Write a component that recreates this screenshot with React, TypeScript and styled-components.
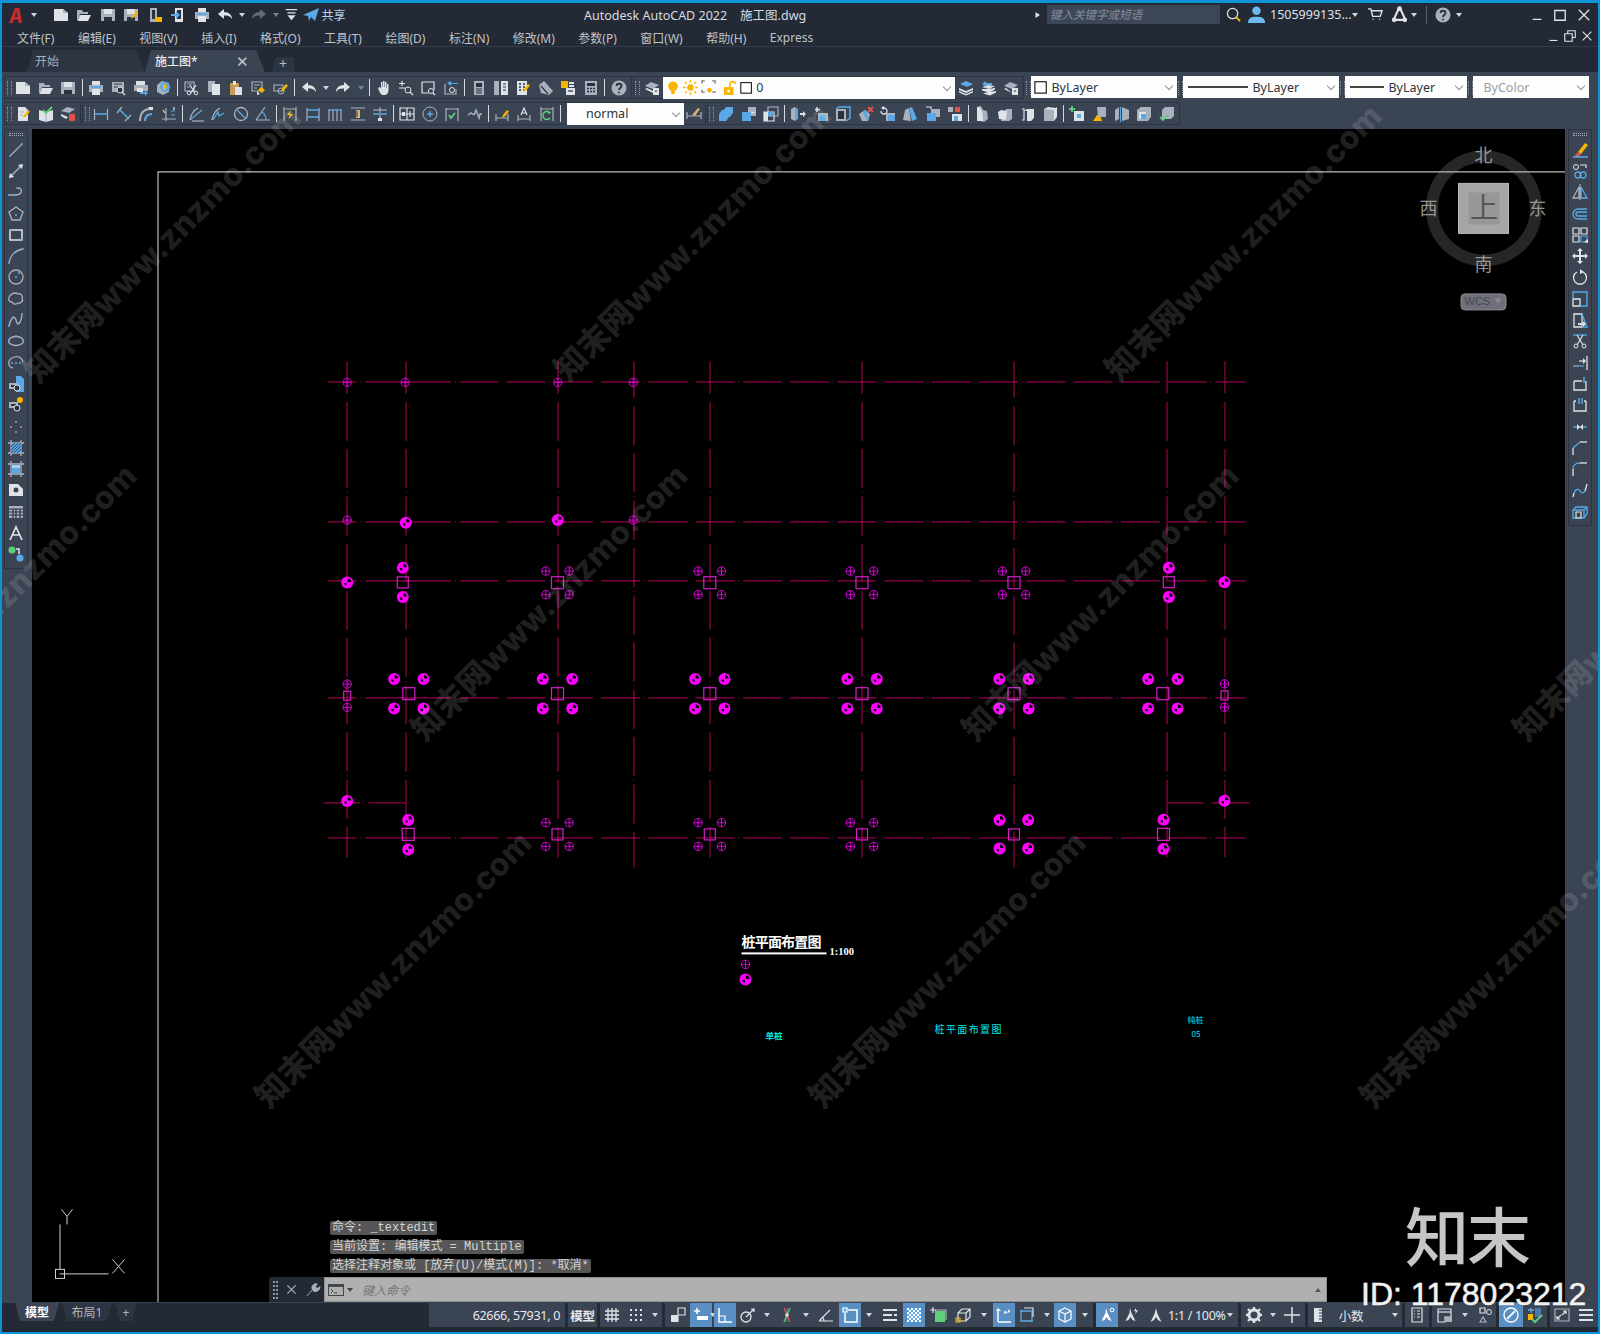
import React, { ReactNode } from 'react'
import styled, { createGlobalStyle } from 'styled-components'

const W = '#dfe3e8'
const L = '#a9b1bc'
const B = '#5aa9e6'
const Y = '#f7b500'
const R = '#e0524d'
const GN = '#5fce7a'
const D = '#2a3240'
const UI_FONT = '"Noto Sans", "Noto Sans CJK SC", sans-serif'

const GlobalStyle = createGlobalStyle`
  html, body {
    margin: 0;
    padding: 0;
    background: #232a35;
  }
  * {
    box-sizing: border-box;
  }
`

const s = (d: string, c = W, w = 1.2) => <path d={d} stroke={c} strokeWidth={w} fill="none" />
const f = (d: string, c = W) => <path d={d} fill={c} />
const dot = (x: number, y: number, c = B, r = 1) => <circle cx={x} cy={y} r={r} fill={c} />
const many = (...n: ReactNode[]) => <>{n.map((x, i) => <React.Fragment key={i}>{x}</React.Fragment>)}</>

const pencil = f('M9 9l4-5 2 1.5-4 5-3 1z', Y)
const doc = f('M3 1h7l3 3v11H3z')
const floppy = many(f('M1 2h14v12H1z', L), f('M4 2h8v5H4z'), f('M4 10h8v4H4z', D))
const bars = s('M1 3h14M1 8h14M1 13h14', W, 2)

const ICONS: Record<string, ReactNode> = {
  new: many(f('M1 2h9l5 4v8H1z'), f('M10 2l5 4h-5z', L)),
  open: many(f('M1 3h5l1 2h5v2H4l-2 6H1z', L), f('M4 8h11l-3 6H1.5z')),
  save: floppy,
  saveas: many(floppy, pencil),
  webopen: many(f('M3 1h7v14H3z', L), f('M5 3h3v9H5z', D), f('M8 10h7v5H8z', Y)),
  websave: many(f('M5 1h8v14H5z', W), f('M7 3h4v9H7z', D), f('M1 7h5V4l4 4-4 4V9H1z', B)),
  print: many(f('M4 1h8v4H4z'), f('M1 5h14v7H1z', L), f('M4 9h8v6H4z'), f('M3 6h10v2H3z', B)),
  preview: many(f('M2 2h12v10H2z', L), s('M4 4h8M4 7h4', D), <circle cx={10} cy={10} r={3} fill={D} stroke={W} />, s('M12 12l3 3')),
  plot: many(f('M3 1h9v4H3z'), f('M1 5h14v6H1z', L), f('M4 8h6v4H4z'), f('M7 12h5v-2l3 3-3 3v-2H7z', B)),
  pub3d: many(f('M2 5l5-4 7 2v9l-6 3-6-3z', L), <circle cx={10} cy={7} r={5} fill={B} />, f('M8 4l4 1-1 4-3 1z', Y)),
  cut: many(s('M2 2h9v9H2z', L), s('M4 4h5M4 7h3', L), s('M7 5l5 8M13 5l-5 8'), <circle cx={6} cy={13} r={1.8} fill="none" stroke={W} />, <circle cx={13} cy={13} r={1.8} fill="none" stroke={W} />),
  copy: many(f('M2 1h7v11H2z', L), f('M6 4h8v11H6z')),
  paste: many(f('M2 3h9v12H2z', '#c89a55'), f('M5 1h3v4H5z'), f('M7 7h7v8H7z')),
  match: many(s('M2 2h10v9H2z', L), s('M4 5h6M4 8h3', L), f('M8 10l3-3 4 3-3 3z', Y), f('M7 11l3 3-3 1z')),
  markup: many(s('M1 5h9v6H1z', L), <circle cx={8} cy={11} r={3} fill="none" stroke={L} />, pencil),
  undo: f('M1 7l6-5v3c5 0 8 3 8 7-2-3-4-3.5-8-3.5V12z'),
  redo: f('M15 7L9 2v3c-5 0-8 3-8 7 2-3 4-3.5 8-3.5V12z'),
  redoOff: f('M15 7L9 2v3c-5 0-8 3-8 7 2-3 4-3.5 8-3.5V12z', '#626b78'),
  hand: f('M3 8l2-1 1 2V2h1.5v5H8V1h1.5v6h.5V2h1.5v6h.5V4h1.5v7c0 2-2 4-4 4H8c-2 0-3-2-5-7z'),
  zoomrt: many(s('M4 1v5M1 3.5h6M1 8h6'), <circle cx={10} cy={10} r={3} fill="none" stroke={W} />, s('M12 12l3 3')),
  zoomwin: many(s('M2 2h12v8M2 2v11h7', W), <circle cx={11} cy={11} r={2.5} fill="none" stroke={W} />, s('M13 13l2 2')),
  zoomprev: many(s('M2 4v10h11V9', L), f('M8 1L4 3l4 3V4h7V3H8z', B), <circle cx={9} cy={10} r={2.5} fill="none" stroke={W} />),
  propsP: many(f('M3 1h10v14H3z', L), f('M5 3h6v4H5z', D), s('M5 9h6M5 11h6M5 13h6', D)),
  dc: many(f('M1 1h5v14H1z', L), f('M8 1h7v14H8z'), s('M10 4h3M10 7h3M10 10h3', D)),
  palette: many(f('M2 1h10v14H2z'), s('M4 4h2M8 4h2M4 7h2M8 7h2M4 10h2M8 10h2', D, 1.5), pencil),
  sheet: many(f('M1 5l5-4 9 10-4 4-8-2z', L), s('M3 6l7 8', D)),
  markset: many(f('M1 1h7v7H1z', Y), s('M9 3h5M9 6h5', W, 2), f('M6 8h9v7H6z'), s('M8 11h5', D)),
  calc: many(f('M2 1h12v14H2z', L), f('M4 3h8v3H4z', D), s('M4 8.5h2M7 8.5h2M10 8.5h2M4 11.5h2M7 11.5h2M10 11.5h2', D, 1.5)),
  help: many(<circle cx={8} cy={8} r={7.5} fill={L} />, s('M5.5 6c0-3 5-3 5 0 0 2-2.5 2-2.5 4', D, 1.8), dot(8, 12.5, D, 1)),
  layer: many(f('M1 6l6-4 8 3-6 4z', L), f('M1 9l8 4 0-2-6-3z'), f('M9 8h6v7H9z'), s('M11 11h2', D)),
  layerM: many(f('M2 4l6-3 7 3-6 3z', B), f('M1 8l7 3 7-3v2l-7 3-7-3z'), f('M1 11l7 3 7-3v1.5l-7 3-7-3z')),
  layerP: many(f('M7 5l7 1-6 3-7-2z'), f('M7 9l7-1v1.5l-6 3-7-2V9z'), f('M7 12l8-1v1.5l-6 3-7-2z'), f('M1 4l4-3v2h6v2H5v2z', B)),
  layerI: many(f('M1 6l6-4 8 3-6 4z', L), f('M1 9l8 4-6-5z'), f('M9 8h6v7H9z'), s('M11 11h2', D)),
  doce: many(doc, pencil, s('M5 6h4M5 9h3', L)),
  docc: many(f('M1 4l7 2 7-2v10l-7 2-7-2z'), s('M8 6v10', L), s('M5 4l3 3 6-6', GN, 1.8)),
  layred: many(f('M1 5l6-4 8 2-6 4z', L), f('M1 8l7 3-2 2-5-3z'), f('M9 8h6v7H9z', R)),
  dimL: many(s('M1.5 3v11M14.5 3v11', L), s('M1.5 8h13', B, 1.5)),
  dimA: many(s('M1 7l5-6M9 15l6-6', L), s('M3 3l10 10', B, 1.5)),
  dimArc: many(s('M2 15c0-8 4-12 11-12', L, 2), s('M7 15c0-5 2-7 7-7', B, 2), f('M10 1h5v3h-3z')),
  dimO: many(s('M1 13h14M5 15V2', L), s('M10 5h4M10 9h4', B), s('M2 4l2 3M13 1v3')),
  dimR: many(s('M2 14C3 8 6 4 10 2', L, 1.3), s('M2 14L14 4', B, 1.3), s('M4 15h12', L)),
  dimJ: many(s('M2 14C3 8 6 4 10 2', L, 1.3), s('M3 14L8 6l1 4 5-3', B, 1.3)),
  dimD: many(<circle cx={8} cy={8} r={6.5} fill="none" stroke={L} strokeWidth={1.3} />, s('M4 4l8 8', B, 1.3)),
  dimAng: many(s('M1 14h14M1 14L10 1', L), s('M7 6c3 2 4 5 4 8', B, 1.3)),
  dimQ: many(s('M2 1v14M14 1v14M2 3h12', L), f('M9 4L5 9h3l-2 5 5-6H8z', Y)),
  dimBs: many(s('M2 2v13M14 2v13', L), s('M2 4h12M2 11h12', B, 1.3)),
  dimC: many(s('M2 3v12M6 3v12M10 3v12M14 3v12', L), s('M2 4h12', B, 1.3)),
  dimS: many(s('M1 2h14M1 14h14', L), f('M6 4h4v8H6z', '#d8b27a'), s('M6 6h2M6 8h2M6 10h2', D)),
  dimB: many(s('M8 1v14', L), s('M1 4h14', L), s('M1 8h6M9 8h6', B, 1.5), f('M6 12h4v3H6z', W)),
  dimT: many(s('M1 2h14v12H1z'), s('M1 8h14M8 2v12M11 5v6'), f('M3 6h3v4H3z', W)),
  dimCn: many(<circle cx={8} cy={8} r={7} fill="none" stroke={L} />, s('M8 5v6M5 8h6', B, 1.5)),
  dimIn: many(s('M2 2v13M14 2v13M2 3h12', L), s('M5 9l2 3 4-5', GN, 1.8)),
  dimJl: many(s('M1 9l3-2 3 2M15 8h-2l-1 4-3-8-2 5', L, 1.5)),
  dimEd: many(s('M2 8v7M14 8v7M2 12h12', L), pencil),
  dimTx: many(s('M2 9v6M14 9v6M2 13h12', L), s('M5 9l3-7 3 7M6 7h4', W)),
  dimU: many(s('M2 1v14M14 1v14M2 3h12', L), s('M11 7a4 4 0 1 0 0 5', GN, 1.5), f('M9 5l3 2-3 1z', GN)),
  dimSt: many(s('M1 6v7M15 6v7M1 10h14', L), f('M6 9l6-7 2 1-5 7z', '#d8b27a')),
  union: many(f('M5 5l3-4h7v6l-3 4H5z', B), f('M1 8l3-4h7v7l-3 4H1z', B)),
  subtract: many(f('M7 1h8v9H7z', L), f('M1 6h9v9H1z', B), f('M10 6h4v1h-4z', W)),
  intersect: many(s('M5 1h10v9H5z', L), s('M1 6h10v9H1z'), f('M5 6h6v4H5z', B), f('M1 6h4v9H1z', W)),
  faceE: many(f('M1 3l4-2v14l-4-2z', L), f('M5 1l3 2v10l-3 2z', B), f('M10 7h3V5l3 3-3 3V9h-3z')),
  faceM: many(s('M4 1v5M2 3.5h5', W, 1.5), f('M5 7h10v8H5z', L), f('M7 9h6v6H7z', B)),
  faceO: many(f('M1 3h10v12H1z', L), s('M1 3l3-2h11v11l-4 3', B, 1.5), f('M3 5h6v8H3z', D)),
  faceD: many(f('M1 8l6-4 5 4-2 7H4z', L), f('M5 6l3-2 3 9-2 2z', B), s('M10 1l5 5M15 1l-5 5', R, 1.8)),
  faceR: many(s('M1 5a3 3 0 1 0 3-3', W, 1.3), f('M4 0v4l-3-2z'), f('M6 7h9v8H6z', L), f('M8 9h7v6H8z', B)),
  faceT: many(f('M1 14l2-10 4-2 2 13z', L), f('M7 2l3-1 5 12-5 2z', B)),
  faceC: many(s('M6 3V1H1', W), f('M6 3h9v8H6z', L), f('M2 7h9v8H2z', B)),
  faceL: many(f('M1 1h5v5H1z', L), f('M8 1h5v5H8z', R), f('M5 8h10v7H5z'), f('M7 10h4v5H7z', B)),
  imprint: many(f('M3 1l4-1 2 4 4 1 1 8-4 3-7-2z', L), f('M3 1c4 0 6 4 6 14H3z')),
  cleanS: many(f('M9 3h6v10l-3 2H4z', L), f('M1 6l3-2 6 1-1 9-7-1z')),
  sepS: many(s('M3 3h2v11H3', W), f('M5 5l3-2h7v9l-3 3H8V5z')),
  shellS: many(f('M2 3h10v12H2z', L), f('M12 3l3-2v10l-3 4z'), f('M2 3l4-2 8 1-2 2z', W)),
  addV: many(s('M3 0v6M0 3h6', GN, 1.8), f('M5 5h10v10H5z'), f('M8 8h4v4H8z', B)),
  clean: many(f('M6 9h3l2 6H2z', Y), f('M6 1h9v10H7z', L)),
  sepp: many(f('M1 4l4-3v12l-4 2z', L), f('M6 1h1v15H6z', B), f('M8 1l7 3v9l-7 2z', L)),
  shell: many(f('M1 4l4-3h10v10l-3 4H1z', L), f('M3 6h7v7H3z'), f('M5 8h5v5H5z', B)),
  check: many(f('M6 1h9v9l-3 3H3V4z', L), s('M1 11l3 3 5-5', GN, 1.8)),
  bulb: many(<circle cx={8} cy={6} r={5.5} fill={Y} />, f('M6 11h4v4H6z', Y)),
  sun: many(<circle cx={8} cy={8} r={3.5} fill={Y} />, s('M8 0v3M8 13v3M0 8h3M13 8h3M2 2l2 2M12 12l2 2M14 2l-2 2M2 14l2-2', Y, 1.5)),
  vpfreeze: many(s('M1 4V1h3M12 1h3v3M1 10v3h3M12 13h3v-1', '#777', 1.3), <circle cx={9} cy={11} r={2.5} fill={Y} />),
  lock: many(f('M1 7h11v9H1z', Y), s('M8 7V3c0-3 6-3 6 0', Y, 1.8), f('M5 10h3v3H5z', '#fff')),
  swatch: <rect x={1} y={2} width={13} height={13} fill="#fff" stroke="#111" strokeWidth={1.3} />,
  line: many(s('M2 14L14 2', L), dot(2, 14), dot(14, 2)),
  xline: many(s('M2 14L14 2', L, 1.5), f('M15 1l-1 5-4-4z'), f('M1 15l5-1-4-4z'), dot(5, 11), dot(11, 5)),
  pline: many(s('M1 11h6c8 0 8-7 3-7', L, 1.3), dot(1, 11), dot(7, 11), dot(9, 4)),
  polygon: many(s('M8 1l7 5-3 8H4L1 6z', L, 1.3), dot(8, 1), dot(8, 9), dot(12, 14)),
  rect: many(s('M2 3h12v10H2z', W, 1.5), dot(2, 3), dot(14, 13)),
  arc: many(s('M1 15C2 7 8 2 15 1', L, 1.3), dot(1, 15), dot(15, 1), dot(6, 5)),
  circle: many(<circle cx={8} cy={8} r={7} fill="none" stroke={L} strokeWidth={1.3} />, dot(8, 8), dot(11, 4)),
  cloud: s('M3 4c2-3 6-2 7-1 3-1 5 2 4 4 2 3-2 6-4 5-3 2-5 1-6-1-3 0-4-3-3-4 0-1 1-3 2-3z', L, 1.3),
  spline: many(s('M1 14C2 8 5 4 7 6s1 6 3 6 4-6 4-10', L, 1.3), dot(1, 14), dot(5, 5), dot(10, 11), dot(14, 2)),
  ellipse: many(<ellipse cx={8} cy={8} rx={7.5} ry={4.5} fill="none" stroke={L} strokeWidth={1.3} />, dot(1, 8), dot(8, 3), dot(15, 8)),
  ellarc: many(s('M5 13C0 12-1 6 4 3s10-1 11 4', L, 1.3), dot(4, 8), dot(8, 8), dot(12, 8)),
  insert: many(f('M8 0h5l3 3v13H8z', B), f('M1 7h9v6H1z', L), f('M3 9h5v2H3z', D), <circle cx={9} cy={12} r={3} fill={D} stroke={W} />),
  block: many(f('M1 5h9v6H1z', L), f('M3 7h5v2H3z', D), <circle cx={9} cy={11} r={3} fill={D} stroke={W} />, <circle cx={12} cy={3} r={3} fill={Y} />),
  point: many(dot(8, 3, W, 0.8), dot(3, 8, W, 0.8), dot(13, 8, W, 0.8), dot(8, 13, W, 0.8)),
  hatch: many(s('M0 3h16M0 13h16M3 0v16M13 0v16', L, 1.3), f('M3 3h10v10H3z', B), s('M3 7l4-4M3 10l7-7M3 13l10-10M6 13l7-7M9 13l4-4', D, 0.8)),
  gradient: many(s('M0 3h16M0 13h16M3 0v16M13 0v16', L, 1.3), f('M4 4h8v8H4z', B), f('M4 4h8v3H4z', '#a9cfee')),
  region: many(f('M1 2h9l5 5v7H1z'), <circle cx={8} cy={8} r={2.5} fill="#3b4453" />),
  table: many(f('M1 2h14v12H1z', L), s('M1 5h14M1 8h14M1 11h14M5 5v9M8 5v9M12 5v9', D)),
  aText: s('M2 15L8 2l6 13M4.5 10h7', W, 1.7),
  addsel: many(<circle cx={4} cy={4} r={3.5} fill={GN} />, <circle cx={12} cy={12} r={3.5} fill={B} />, s('M8 3h3v5', W, 1.5)),
  erase: many(f('M6 10l7-9 3 2-7 9z', Y), f('M3 13l3-3 3 2-2 3H3z', R), s('M1 15h15', B, 1.5)),
  copyO: many(<circle cx={4} cy={4} r={2.5} fill="none" stroke={W} />, s('M8 2h6v3', W), <circle cx={6} cy={12} r={3} fill="none" stroke={B} strokeWidth={1.3} />, <circle cx={11} cy={12} r={3} fill="none" stroke={B} strokeWidth={1.3} />),
  mirror: many(s('M1 14h6V3z', L, 1.3), s('M15 14H9V3z', B, 1.3), s('M8 0v16', W, 0.8)),
  offset: s('M15 3H6a5 5 0 0 0 0 10h9M15 6H6a2 2 0 0 0 0 4h9', B, 1.3),
  array: many(s('M1 1h6v6H1zM9 1h6v6H9zM1 9h6v6H1z', W), s('M9 9h6v6H9z', B), f('M12 15l4 1v-4z', W)),
  move: f('M8 0l3 3H9v4h4V5l3 3-3 3V9H9v4h2l-3 3-3-3h2V9H3v2L0 8l3-3v2h4V3H5z'),
  rotate: many(s('M5 3a6.5 6.5 0 1 0 6 0', W, 1.3), f('M8 0l4 3-4 2z', W)),
  scale: many(s('M1 8h7v7H1z', W, 1.3), s('M1 8V1h14v14H8', B, 1.3)),
  stretch: many(s('M2 15V2h8v13z', W, 1.3), s('M10 2l5 13h-5', B, 1.3), f('M6 11h5V9l3 3-3 3v-2H6z')),
  trim: many(s('M1 2h14', B, 1.3), s('M5 2l6 10M11 2L5 12'), <circle cx={4} cy={13} r={2} fill="none" stroke={W} />, <circle cx={12} cy={13} r={2} fill="none" stroke={W} />),
  extend: many(s('M15 1v14', W, 1.3), s('M1 11h6', L), s('M7 6h5', W), s('M7 11h5', B), f('M11 3l3 3-3 3z')),
  breakO: many(s('M2 5h8M2 5v9h12V5', W, 1.3), s('M12 1v6', B, 1.5)),
  breakP: many(s('M2 4v10h12V4M2 4h2M12 4h2', W, 1.3), s('M7 1v6M10 1v6', B, 1.5)),
  join: many(s('M1 8h14', B, 1.3), f('M5 5l3 3-3 3zM11 5L8 8l3 3z')),
  chamfer: many(s('M1 15V8', W, 1.3), s('M1 8l7-6', B, 1.3), s('M8 2h7', W, 1.3)),
  fillet: many(s('M1 15V8', W, 1.3), s('M1 8c0-4 3-6 7-6', B, 1.3), s('M8 2h7', W, 1.3)),
  blend: many(s('M1 15l1-4', W, 1.3), s('M2 11c2-5 5-4 6-2s3 3 5 0', B, 1.3), s('M13 9l2-7', W, 1.3)),
  explode: many(s('M1 6l3-3h11v7l-3 4H1z', B, 1.3), s('M1 6h11v8M12 6l3-3', B, 1.3), s('M4 8h5v6H4z')),
  grid: s('M4 1v14M8 1v14M12 1v14M1 4h14M1 8h14M1 12h14', W, 1.3),
  snap: many(...[3, 8, 13].flatMap((y) => [3, 8, 13].map((x) => <rect key={x + '' + y} x={x - 1} y={y - 1} width={2} height={2} fill={W} />))),
  infer: many(s('M8 1h7v7H8z'), f('M1 8h7v7H1z'), s('M8 8v7')),
  dyn: many(s('M4 1v6M1 4h6', '#fff', 1.5), f('M4 9h11v4H4z', '#fff')),
  ortho: many(s('M2 1v14h13', '#fff', 1.5), s('M2 9h6v6', '#fff')),
  polar: many(<circle cx={6} cy={10} r={5} fill="none" stroke={W} strokeWidth={1.3} />, s('M6 10L14 2M11 2h3v3')),
  iso: many(s('M5 1l6 14', R, 1.3), s('M11 1L5 15', GN, 1.3), s('M8 1v14', L, 0.6), <circle cx={8} cy={8} r={1.8} fill={W} />),
  track: many(s('M1 14h14M1 14L12 3'), s('M6 14c0-2-1-3-2-4', W)),
  osnap: many(s('M3 3h12v12H3z', '#fff', 1.5), f('M0 0h6v6H0z', B), s('M1 1h4v4H1z', '#fff')),
  lw: s('M1 3h14M1 8h9M1 13h14M12 8h3', W, 2.2),
  transp: many(f('M1 1h14v14H1z', '#fff'), ...[0, 1, 2, 3, 4, 5, 6].flatMap((y) => [0, 1, 2, 3, 4, 5, 6].filter((x) => (x + y) % 2).map((x) => <rect key={x + '-' + y} x={1 + x * 2} y={1 + y * 2} width={2} height={2} fill={B} />))),
  selc: many(s('M3 0v6M0 3h6', W), f('M5 4h10v11H5z', GN), s('M5 4l2-1h9v10', L)),
  osnap3: many(s('M3 6l4-4h8v8l-4 4H3zM3 6h8v8M11 6l4-4'), s('M1 11h4v4H1z', Y)),
  dynu: many(s('M2 15V3', '#fff', 1.5), s('M2 15h13', '#fff', 1.5), f('M2 1l3 3H0z', '#fff'), f('M9 3l2 3-3 1zM11 6l2-4 1 3z', '#fff')),
  boxsel: many(s('M2 4h11v10H2z', B, 1.3), s('M5 1h9v9', W), dot(2, 4), dot(13, 14)),
  gizmo: many(s('M8 1l6 3v8l-6 3-6-3V4zM2 4l6 3 6-3M8 7v8', '#fff')),
  annoT: many(f('M7 1l1.5 5 4 8-3-1-2-3-2 3-3 1 4-8z', '#fff'), <circle cx={13} cy={3} r={1.8} fill="none" stroke="#fff" />),
  annoS: many(f('M7 1l1.5 5 4 8-3-1-2-3-2 3-3 1 4-8z'), f('M13 1l-2 3 2 .5-1 3 3-4-2-.5z')),
  anno: f('M8 1l1.5 6 4 8-3.5-2-2-3-2 3-3.5 2 4-8z'),
  gear: many(<circle cx={8} cy={8} r={5} fill="none" stroke={W} strokeWidth={3} />, s('M8 0v3M8 13v3M0 8h3M13 8h3M2 2l2 2M12 12l2 2M14 2l-2 2M2 14l2-2', W, 2.4)),
  plus: s('M8 0v16M0 8h16', W, 1.5),
  ruler: many(f('M4 1h8v14H4z'), s('M9 3h3M9 6h3M9 9h3M9 12h3', D)),
  calcS: many(s('M3 1h10v14H3z'), s('M5 4h1M8 4h3M5 7h1M8 7h3M5 10h1M8 10h3')),
  wlock: many(s('M1 2h13v8H8v5H1z'), f('M9 10h6v5H9z', L), s('M1 5h13', W)),
  isol: many(s('M4 1h5v5H4z'), <circle cx={13} cy={5} r={2.5} fill="none" stroke={W} />, s('M4 15l3-5 3 5z', L)),
  hw: many(<circle cx={8} cy={8} r={7} fill="none" stroke="#fff" strokeWidth={1.3} />, s('M4 12l8-8', '#fff', 1.8)),
  annmon: many(s('M4 1v5M1 3h6', B, 1.3), f('M1 7h5v6H1z', Y), f('M8 1h6v9H8z', '#4a78a8'), s('M5 12l3 3 7-7', GN, 2)),
  clean2: many(s('M1 2h14v12H1z', L), s('M3 12l4-4M3 9v3h3M12 4L8 8M9 4h3v3', W)),
  burger: bars,
}

const Glyph = styled.svg.attrs({ viewBox: '0 0 16 16' })<{ $size?: number }>`
  width: ${({ $size }) => $size || 16}px;
  height: ${({ $size }) => $size || 16}px;
  flex-shrink: 0;
  display: block;
  overflow: visible;
`

const Icon = ({ name, size }: { name: string; size?: number }) => (
  <Glyph $size={size}>{ICONS[name]}</Glyph>
)

const Caret = styled.span<{ $w?: number; $color?: string }>`
  width: ${({ $w }) => $w || 12}px;
  flex-shrink: 0;
  display: flex;
  justify-content: center;
  &::after {
    content: '';
    border-left: 3px solid transparent;
    border-right: 3px solid transparent;
    border-top: 4px solid ${({ $color }) => $color || '#d3d7dc'};
  }
`

const Window = styled.div`
  position: relative;
  width: 1600px;
  height: 1334px;
  display: flex;
  flex-direction: column;
  overflow: hidden;
  background: #232a35;
  border: 2px solid #0c93d8;
  border-top-width: 3px;
  font-family: ${UI_FONT};
  color: #ccd0d6;
`

const TitleBar = styled.div`
  height: 23px;
  display: flex;
  align-items: center;
  flex-shrink: 0;
`

const QuickAccess = styled.div`
  width: 582px;
  display: flex;
  align-items: center;
  padding-left: 7px;
`

const QuickBtn = styled.span`
  width: 23.5px;
  display: flex;
  justify-content: center;
  flex-shrink: 0;
`

const ShareLabel = styled.span`
  font-size: 12px;
  color: #b9d3ea;
  margin-left: 3px;
`

const AppTitle = styled.span`
  font-size: 12.5px;
  color: #d8dbe0;
  white-space: pre;
`

const TitleRight = styled.div`
  margin-left: auto;
  display: flex;
  align-items: center;
  width: 564px;
  height: 100%;
`

const SearchBox = styled.div`
  width: 173px;
  height: 19px;
  background: #3c4657;
  font-size: 11.5px;
  font-style: italic;
  color: #868e9a;
  padding-left: 3px;
  line-height: 19px;
`

const UserName = styled.span`
  font-size: 12.5px;
  color: #dfe3e8;
  width: 78px;
  white-space: nowrap;
`

const Gap = styled.span<{ $w: number }>`
  width: ${({ $w }) => $w}px;
  flex-shrink: 0;
`

const VLine = styled.span`
  width: 1px;
  height: 18px;
  background: #566072;
  flex-shrink: 0;
`

const MenuBar = styled.div`
  height: 21px;
  display: flex;
  align-items: center;
  gap: 23.5px;
  padding: 3px 0 0 15px;
  font-size: 12px;
  flex-shrink: 0;
  position: relative;
  border-bottom: 1px solid #333c4a;
`

const MenuItem = styled.span`
  color: #bfc4cb;
  white-space: nowrap;
`

const DocControls = styled.div`
  position: absolute;
  right: 6px;
  top: 4px;
  display: flex;
  align-items: center;
  gap: 6px;
`

const TabBar = styled.div`
  height: 25px;
  display: flex;
  align-items: flex-end;
  padding-left: 25px;
  flex-shrink: 0;
`

const Tab = styled.div<{ $active?: boolean; $w: number }>`
  width: ${({ $w }) => $w}px;
  height: 22px;
  padding-left: ${({ $active }) => ($active ? 10 : 8)}px;
  display: flex;
  align-items: center;
  font-size: 12px;
  color: ${({ $active }) => ($active ? '#e9ebee' : '#a9aeb6')};
  background: ${({ $active }) => ($active ? '#3b4453' : '#2d3542')};
  clip-path: polygon(0 100%, 6px 0, calc(100% - 9px) 0, 100% 100%);
  font-weight: ${({ $active }) => ($active ? 500 : 400)};
`

const TabClose = styled.span`
  margin-left: auto;
  margin-right: 16px;
  font-size: 15px;
  color: #c4c9cf;
`

const TabAdd = styled.span`
  margin-left: 7px;
  width: 22px;
  height: 15px;
  background: #2d3542;
  clip-path: polygon(0 100%, 4px 0, 100% 0, 100% 100%);
  font-size: 14px;
  line-height: 14px;
  text-align: center;
  color: #b4b9c0;
`

const ToolArea = styled.div`
  height: 57px;
  background: #3b4453;
  flex-shrink: 0;
  padding: 4px 0 0 2px;
  display: flex;
  flex-direction: column;
  gap: 3px;
`

const ToolRow = styled.div`
  height: 23px;
  display: flex;
  align-items: stretch;
`

const ToolGroup = styled.div`
  display: flex;
  align-items: center;
  border: 1px solid #2c3442;
  margin-right: 1px;
  padding: 0 1px;
`

const Grip = styled.span`
  width: 6px;
  flex-shrink: 0;
  align-self: center;
  height: 14px;
  display: flex;
  justify-content: center;
  &::after {
    content: '';
    width: 3px;
    height: 14px;
    border-left: 1px dotted #8f97a3;
    border-right: 1px dotted #8f97a3;
  }
`

const Tool = styled.span<{ $w?: number }>`
  width: ${({ $w }) => $w || 22.4}px;
  display: flex;
  justify-content: center;
  flex-shrink: 0;
`

const Sep = styled.span<{ $w?: number }>`
  width: ${({ $w }) => $w || 5}px;
  display: flex;
  justify-content: center;
  flex-shrink: 0;
  &::after {
    content: '';
    width: 1px;
    height: 17px;
    background: #d5d9de;
  }
`

const Combo = styled.div<{ $w: number; $muted?: boolean }>`
  width: ${({ $w }) => $w}px;
  height: 22px;
  flex-shrink: 0;
  background: #fdfdfd;
  display: flex;
  align-items: center;
  gap: 3px;
  padding: 0 3px;
  font-size: 12.5px;
  color: ${({ $muted }) => ($muted ? '#9aa0a8' : '#2f3640')};
  white-space: nowrap;
  position: relative;
  &::after {
    content: '';
    position: absolute;
    right: 5px;
    top: 7px;
    width: 5px;
    height: 5px;
    border-right: 1.3px solid #8d939b;
    border-bottom: 1.3px solid #8d939b;
    transform: rotate(45deg);
  }
`

const NormalCombo = styled(Combo)`
  margin-left: 4px;
`

const ComboLine = styled.span<{ $w: number }>`
  width: ${({ $w }) => $w}px;
  height: 1.5px;
  background: #444;
  margin: 0 1px 0 2px;
  flex-shrink: 0;
`

const Main = styled.div`
  flex: 1;
  display: flex;
  min-height: 0;
`

const Dock = styled.div<{ $w: number; $pl: number }>`
  width: ${({ $w }) => $w}px;
  padding-left: ${({ $pl }) => $pl}px;
  background: #3b4453;
  flex-shrink: 0;
`

const DockBar = styled.div`
  width: 24px;
  border: 1px solid #2c3442;
  display: flex;
  flex-direction: column;
  align-items: center;
  padding-bottom: 3px;
`

const DockGrip = styled.span`
  width: 14px;
  height: 3px;
  margin: 3px 0 3px;
  border-top: 1px dotted #a2a9b3;
  border-bottom: 1px dotted #a2a9b3;
`

const DockItem = styled.span`
  height: 21.3px;
  display: flex;
  align-items: center;
`

const Canvas = styled.div`
  flex: 1;
  position: relative;
  background: #000;
  overflow: hidden;
`

const Drawing = styled.svg`
  position: absolute;
  inset: 0;
  width: 100%;
  height: 100%;
  display: block;
`

const CommandHistory = styled.div`
  position: absolute;
  left: 298px;
  bottom: 29px;
  display: flex;
  flex-direction: column;
  align-items: flex-start;
  gap: 5px;
`

const HistoryLine = styled.span`
  height: 14px;
  line-height: 14px;
  padding: 0 2px;
  background: #565656;
  border-radius: 2px;
  font-family: "Liberation Mono", "Noto Sans CJK SC", monospace;
  font-size: 12px;
  color: #d4d4d4;
  white-space: pre;
`

const CommandBar = styled.div`
  position: absolute;
  left: 237px;
  bottom: 0;
  width: 1058px;
  height: 25px;
  display: flex;
  align-items: stretch;
`

const CommandTools = styled.div`
  width: 55px;
  background: #232a35;
  border-radius: 3px 0 0 0;
  display: flex;
  align-items: center;
  gap: 8px;
  padding-left: 4px;
`

const CommandGrip = styled.span`
  width: 5px;
  height: 18px;
  border-left: 2px dotted #8f97a3;
  border-right: 2px dotted #8f97a3;
  flex-shrink: 0;
`

const CommandInput = styled.div`
  flex: 1;
  background: #b0b0b0;
  border: 1px solid #8f8f8f;
  display: flex;
  align-items: center;
  padding-left: 3px;
  font-size: 12px;
  font-style: italic;
  color: #747474;
  position: relative;
  &::after {
    content: '';
    position: absolute;
    right: 5px;
    top: 10px;
    border-left: 3px solid transparent;
    border-right: 3px solid transparent;
    border-bottom: 4px solid #555;
  }
`

const StatusBar = styled.div`
  height: 30px;
  display: flex;
  align-items: flex-start;
  gap: 3px;
  flex-shrink: 0;
  border-top: 1px solid #39424f;
`

const LayoutTabs = styled.div`
  width: 424px;
  height: 18px;
  display: flex;
  padding-left: 13px;
  gap: 3px;
  flex-shrink: 0;
`

const LayoutTab = styled.span<{ $active?: boolean; $w: number }>`
  width: ${({ $w }) => $w}px;
  height: 18px;
  background: ${({ $active }) => ($active ? '#3b4453' : '#2d3542')};
  color: ${({ $active }) => ($active ? '#fff' : '#b0b5bc')};
  font-weight: ${({ $active }) => ($active ? 700 : 400)};
  font-size: 12px;
  display: flex;
  align-items: center;
  justify-content: center;
  clip-path: polygon(0 0, 100% 0, calc(100% - 5px) 100%, 5px 100%);
`

const StatusGroup = styled.div<{ $w?: number }>`
  ${({ $w }) => ($w ? `width: ${$w}px;` : '')}
  height: 24px;
  background: #3b4453;
  display: flex;
  align-items: center;
  flex-shrink: 0;
  font-size: 12.5px;
  color: #e8eaed;
  white-space: nowrap;
`

const Coords = styled(StatusGroup)`
  justify-content: flex-end;
  padding-right: 5px;
  letter-spacing: -0.3px;
`

const StatusBtn = styled.span<{ $w: number; $active?: boolean }>`
  width: ${({ $w }) => $w}px;
  height: 24px;
  display: flex;
  align-items: center;
  justify-content: center;
  flex-shrink: 0;
  background: ${({ $active }) => ($active ? '#5a8fc4' : 'transparent')};
`

const StatusText = styled.span<{ $w: number; $bold?: boolean }>`
  width: ${({ $w }) => $w}px;
  text-align: center;
  letter-spacing: -0.3px;
  flex-shrink: 0;
  font-weight: ${({ $bold }) => ($bold ? 700 : 400)};
`

const Brand = styled.div`
  position: absolute;
  left: 1403px;
  top: 1192px;
  font-family: "Noto Sans CJK SC", sans-serif;
  font-size: 64px;
  line-height: 76px;
  font-weight: 500;
  color: #c6c6c6;
  letter-spacing: -2px;
  pointer-events: none;
`

const BrandId = styled.div`
  position: absolute;
  left: 1359px;
  top: 1273px;
  font-family: "Liberation Sans", sans-serif;
  font-size: 32px;
  line-height: 36px;
  color: #f2f2f2;
  -webkit-text-stroke: 0.5px #f2f2f2;
  text-shadow: 0 0 2px #333;
  white-space: nowrap;
  pointer-events: none;
`

const Watermark = styled.div.attrs<{ $x: number; $y: number }>(({ $x, $y }) => ({
  style: { left: $x, top: $y },
}))<{ $x: number; $y: number }>`
  position: absolute;
  transform-origin: 0 50%;
  transform: rotate(-45deg);
  font-family: "Inter", "Noto Sans CJK SC", sans-serif;
  font-size: 32px;
  line-height: 44px;
  font-weight: 800;
  color: rgba(255, 255, 255, 0.13);
  white-space: nowrap;
  pointer-events: none;
`

const row1: string[] = [
  'new', 'open', 'save', '|', 'print', 'preview', 'plot', 'pub3d', '|', 'cut', 'copy', 'paste', 'match', 'markup', '|',
  'undo', 'v', 'redo', 'v!', '|', 'hand', 'zoomrt', 'zoomwin', 'zoomprev', '|', 'propsP', 'dc', 'palette', 'sheet', 'markset', 'calc', '|', 'help',
]
const row2a = ['doce', 'docc', 'layred']
const row2b = [
  'dimL', 'dimA', 'dimArc', 'dimO', '|', 'dimR', 'dimJ', 'dimD', 'dimAng', '|', 'dimQ', 'dimBs', 'dimC', 'dimS', 'dimB', '|',
  'dimT', 'dimCn', 'dimIn', 'dimJl', '|', 'dimEd', 'dimTx', 'dimU', '|',
]
const row2c = [
  'union', 'subtract', 'intersect', '|', 'faceE', 'faceM', 'faceO', 'faceD', 'faceR', 'faceT', 'faceC', 'faceL', '|',
  'imprint', 'cleanS', 'sepS', 'shellS', '|', 'addV', 'clean', 'sepp', 'shell', 'check',
]
const leftDock = [
  'line', 'xline', 'pline', 'polygon', 'rect', 'arc', 'circle', 'cloud', 'spline', 'ellipse', 'ellarc', 'insert', 'block',
  'point', 'hatch', 'gradient', 'region', 'table', 'aText', 'addsel',
]
const rightDock = [
  'erase', 'copyO', 'mirror', 'offset', 'array', 'move', 'rotate', 'scale', 'stretch', 'trim', 'extend', 'breakO', 'breakP',
  'join', 'chamfer', 'fillet', 'blend', 'explode',
]

const Tools = ({ items, sep }: { items: string[]; sep?: number }) => (
  <>
    {items.map((it, i) =>
      it === '|' ? (
        <Sep key={i} $w={sep} />
      ) : it === 'v' || it === 'v!' ? (
        <Caret key={i} $color={it === 'v!' ? '#7b8491' : undefined} />
      ) : (
        <Tool key={i}>
          <Icon name={it} />
        </Tool>
      ),
    )}
  </>
)

const MENUS = ['文件(F)', '编辑(E)', '视图(V)', '插入(I)', '格式(O)', '工具(T)', '绘图(D)', '标注(N)', '修改(M)', '参数(P)', '窗口(W)', '帮助(H)', 'Express']

const WATERMARKS = [
  [28, 352], [558, 350], [1109, 350],
  [-136, 710], [415, 710], [966, 710], [1517, 710],
  [259, 1077], [813, 1077], [1364, 1077],
]

// the drawing uses page coordinates, the viewBox moves them into the canvas
const HY = [382, 522, 581, 698, 838]
const VX = [347, 406, 558, 634, 710, 862, 1014, 1167, 1225]
const PERIOD = 94.5

const dashed = (from: number, to: number, anchor: number, dotMin: number) => {
  const out: string[] = []
  let a = anchor
  while (a > from - PERIOD) a -= PERIOD
  for (; a < to; a += PERIOD) {
    const parts: [number, number][] = [[a, a + 39], [a + 47, a + 86], [a + 90, a + 91]]
    parts.forEach(([p, q], i) => {
      if (i === 2 && p < dotMin) return
      const x1 = Math.max(p, from)
      const x2 = Math.min(q, to)
      if (x2 > x1) out.push(`${x1.toFixed(1)} ${x2.toFixed(1)}`)
    })
  }
  return out
}

const hPath = HY.map((y) =>
  [...dashed(328, 1246, 460, 0), '404 413']
    .map((seg) => {
      const [a, b] = seg.split(' ')
      return `M${a} ${y + 0.5}H${b}`
    })
    .join(''),
).join('')

const vPath = VX.map((x) => {
  const shifted = x === 634 || x === 1014
  const segs = dashed(362, shifted ? 868 : 858, shifted ? 501.5 : 497, 420)
  return segs
    .map((seg) => {
      const [a, b] = seg.split(' ')
      return `M${x + 0.5} ${a}V${b}`
    })
    .join('')
}).join('')

const extraPath = 'M324 803.5H361M369 803.5H406M1168 803.5H1204M1212 803.5H1250'

type Pt = [number, number]

const CROSS: Pt[] = [
  [347.7, 383], [405.7, 383], [558.3, 383], [633.7, 383], [347.7, 520.7], [633.7, 520.7],
  [347.7, 684.7], [347.7, 708], [1225, 684.4], [1225, 707.8], [746, 965],
  ...[558, 710.3, 862.5].flatMap((x): Pt[] => [[x - 11.7, 823.3], [x + 11.7, 823.3], [x - 11.7, 847], [x + 11.7, 847]]),
  ...[558, 710.3, 862.5, 1014.5].flatMap((x): Pt[] => [[x - 11.7, 571.7], [x + 11.7, 571.7], [x - 11.7, 595.3], [x + 11.7, 595.3]]),
]

const PILES: Pt[] = [
  [406.3, 523.3], [558.3, 520.7], [347.7, 583], [403.3, 568.3], [403.3, 597.7], [1169.3, 568.3], [1169.3, 597.6],
  [1225, 582.8], [347.7, 801.7], [1225, 801.4], [408.7, 820.7], [408.7, 850], [1164, 820.4], [1164, 849.6], [746, 980],
  [1000, 820.5], [1028.6, 820.5], [1000, 849], [1028.6, 849],
  ...[409.3, 558, 710.3, 862.5, 1014.5, 1163.3].flatMap((x): Pt[] => [[x - 14.7, 679.7], [x + 14.7, 679.7], [x - 14.7, 709], [x + 14.7, 709]]),
]

const SQUARES: [number, number, number, number][] = [
  [403.3, 583, 11, 11], [558, 583.3, 12, 12], [710.3, 583.3, 12, 12], [862.5, 583.3, 12, 12], [1014.5, 583.3, 12, 12], [1169.3, 582.8, 11, 11],
  [347.7, 696.3, 7, 9], [1225, 696, 7, 9], [409.3, 694.3, 12, 12], [558, 694.3, 12, 12], [710.3, 694.3, 12, 12], [862.5, 694.3, 12, 12], [1014.5, 694.3, 12, 12], [1163.3, 694.3, 12, 12],
  [408.7, 835, 12, 12], [558, 835, 11, 11], [710.3, 835, 11, 11], [862.5, 835, 11, 11], [1014.5, 835, 11, 11], [1164, 835, 12, 12],
]

const Plan = () => (
  <g>
    <path d={hPath + vPath + extraPath} stroke="#b8005f" strokeWidth={1} fill="none" />
    {SQUARES.map(([x, y, w, h], i) => (
      <rect key={i} x={x - w / 2} y={y - h / 2} width={w} height={h} fill="none" stroke="#d020c8" strokeWidth={1.2} />
    ))}
    {CROSS.map(([x, y], i) => (
      <g key={i} transform={`translate(${x} ${y})`} stroke="#d800d8" strokeWidth={1} fill="none">
        <circle r={4.2} />
        <path d="M-4.2 0H4.2M0 -4.2V4.2" />
      </g>
    ))}
    {PILES.map(([x, y], i) => (
      <g key={i} transform={`translate(${x} ${y})`}>
        <circle r={6} fill="#ff00ff" />
        <path d="M0.5 -0.5H4A3.5 3.5 0 0 0 0.5 -4Z" fill="#000" />
        <path d="M-0.5 0.5H-3A2.5 2.5 0 0 0 -0.5 3Z" fill="#000" />
      </g>
    ))}
  </g>
)

const Labels = () => (
  <g>
    <text x={742} y={948} fill="#fff" fontSize={14} fontWeight={700} textLength={80} fontFamily='"Noto Sans CJK SC", sans-serif'>桩平面布置图</text>
    <rect x={742} y={953} width={85} height={2} fill="#fff" />
    <text x={830} y={956} fill="#fff" fontSize={10.5} fontWeight={700} fontFamily='"Liberation Serif", serif'>1:100</text>
    <g fill="#00e8e8" fontFamily='"Noto Sans CJK SC", sans-serif'>
      <text x={935} y={1034} fontSize={10} textLength={67}>桩平面布置图</text>
      <text x={766} y={1040} fontSize={8.5} fontWeight={700}>单桩</text>
      <text x={1188} y={1024} fontSize={8}>纯桩</text>
      <text x={1192} y={1038} fontSize={8}>05</text>
    </g>
  </g>
)

const ViewCube = () => (
  <g>
    <circle cx={1484.5} cy={209} r={52} fill="none" stroke="#262626" strokeWidth={12} />
    <path d="M158.5 1310V172.5H1570" fill="none" stroke="#bcbcbc" strokeWidth={1.2} />
    <rect x={1459} y={184} width={50} height={50} fill="#a6a6a6" stroke="#b8b8b8" />
    <rect x={1469} y={193} width={31} height={32} fill="#979797" />
    <text x={1484.5} y={219} fontSize={28} fill="#555" textAnchor="middle" fontFamily='"Noto Sans CJK SC", sans-serif'>上</text>
    <g fontSize={18} fill="#969696" textAnchor="middle" fontFamily='"Noto Sans CJK SC", sans-serif'>
      <text x={1484} y={163}>北</text>
      <text x={1484} y={272}>南</text>
      <text x={1429} y={216}>西</text>
      <text x={1538} y={216}>东</text>
    </g>
    <rect x={1461.5} y={294.5} width={45} height={16} rx={4} fill="#6f6f7a" stroke="#8a8a93" />
    <text x={1465} y={306} fontSize={11} fill="#474750" fontFamily='"Liberation Sans", sans-serif'>WCS</text>
    <path d="M1495 299h7l-3.5 5z" fill="#8a8a93" />
  </g>
)

const UcsIcon = () => (
  <g stroke="#d0d0d0" fill="none" strokeWidth={1}>
    <path d="M60.5 1225V1270M60 1274.5H109" />
    <rect x={56} y={1270} width={9} height={9} />
    <path d="M62 1210l5.5 7 5.5-7M67.5 1217v8" />
    <path d="M113 1260l12 14M125 1260l-12 14" />
  </g>
)

const StatusItems = ({ items }: { items: [string, number, boolean?][] }) => (
  <>
    {items.map((it, i) =>
      it[0] === 'v' ? (
        <Caret key={i} $w={it[1]} />
      ) : (
        <StatusBtn key={i} $w={it[1]} $active={it[2]}>
          <Icon name={it[0]} />
        </StatusBtn>
      ),
    )}
  </>
)

const App = () => {
  return (
    <Window>
      <GlobalStyle />
      <TitleBar>
        <QuickAccess>
          <Glyph $size={16}>
            <path d="M0 16L6 1h4.5L13 16H9.5L9 12.5H5L3.5 16zM5.8 10H8.5L7.3 4.5z" fill="#c62c2c" />
          </Glyph>
          <Caret $w={18} />
          <Gap $w={6} />
          {['new', 'open', 'save', 'saveas', 'webopen', 'websave', 'print'].map((n) => (
            <QuickBtn key={n}>
              <Icon name={n} />
            </QuickBtn>
          ))}
          <QuickBtn>
            <Icon name="undo" />
          </QuickBtn>
          <Caret $w={10} />
          <QuickBtn>
            <Icon name="redoOff" />
          </QuickBtn>
          <Caret $w={10} $color="#7b8491" />
          <Gap $w={4} />
          <Glyph $size={13}>
            <path d="M1 2h14M3 6h10" stroke={W} strokeWidth={1.5} />
            <path d="M3 9h10l-5 6z" fill={W} />
          </Glyph>
          <Gap $w={5} />
          <Glyph>
            <path d="M0 8L16 1l-4 13-4-4-2 4-1-5z" fill={B} />
          </Glyph>
          <ShareLabel>共享</ShareLabel>
        </QuickAccess>
        <AppTitle>Autodesk AutoCAD 2022    施工图.dwg</AppTitle>
        <TitleRight>
          <Glyph $size={8}>
            <path d="M3 2l9 6-9 6z" fill={W} />
          </Glyph>
          <Gap $w={5} />
          <SearchBox>键入关键字或短语</SearchBox>
          <Gap $w={6} />
          <Glyph $size={15}>
            <circle cx={7} cy={7} r={5.5} fill="none" stroke={W} strokeWidth={1.3} />
            <path d="M11 11l4 4" stroke={Y} strokeWidth={2} />
          </Glyph>
          <Gap $w={7} />
          <Glyph $size={17}>
            <circle cx={8} cy={4.5} r={4} fill="#6db9ef" />
            <path d="M0 16c0-5 3-6 8-6s8 1 8 6z" fill="#6db9ef" />
          </Glyph>
          <Gap $w={5} />
          <UserName>1505999135...</UserName>
          <Caret $w={14} />
          <Gap $w={6} />
          <Glyph $size={15}>
            <path d="M0 2h3l2 8h8l2-6H4M5 13h1M12 13h1" fill="none" stroke={W} strokeWidth={1.5} />
          </Glyph>
          <Gap $w={8} />
          <Glyph $size={17}>
            <path d="M8 1L2 14M8 1l6 13M3 13h10" stroke={W} strokeWidth={2} fill="none" />
            <circle cx={8} cy={2.5} r={2.2} fill={W} />
            <circle cx={3} cy={13} r={2.2} fill={W} />
            <circle cx={13} cy={13} r={2.2} fill={W} />
          </Glyph>
          <Caret $w={12} />
          <Gap $w={6} />
          <VLine />
          <Gap $w={8} />
          <Icon name="help" />
          <Caret $w={16} />
          <Gap $w={65} />
          <Glyph $size={10}>
            <path d="M1 15h14" stroke={W} strokeWidth={2} />
          </Glyph>
          <Gap $w={12} />
          <Glyph $size={12}>
            <path d="M1 2h14v13H1z" fill="none" stroke={W} strokeWidth={1.8} />
          </Glyph>
          <Gap $w={12} />
          <Glyph $size={12}>
            <path d="M1 1l14 14M15 1L1 15" stroke={W} strokeWidth={1.8} />
          </Glyph>
        </TitleRight>
      </TitleBar>
      <MenuBar>
        {MENUS.map((m) => (
          <MenuItem key={m}>{m}</MenuItem>
        ))}
        <DocControls>
          <Glyph $size={9}>
            <path d="M1 15h14" stroke={W} strokeWidth={2} />
          </Glyph>
          <Glyph $size={12}>
            <path d="M5 5V1h10v9h-4M1 5h10v10H1z" fill="none" stroke={W} strokeWidth={1.5} />
          </Glyph>
          <Glyph $size={10}>
            <path d="M1 1l14 14M15 1L1 15" stroke={W} strokeWidth={1.8} />
          </Glyph>
        </DocControls>
      </MenuBar>
      <TabBar>
        <Tab $w={118}>开始</Tab>
        <Tab $w={120} $active>
          施工图*
          <TabClose>✕</TabClose>
        </Tab>
        <TabAdd>+</TabAdd>
      </TabBar>
      <ToolArea>
        <ToolRow>
          <ToolGroup>
            <Grip />
            <Tools items={row1} sep={5.7} />
          </ToolGroup>
          <ToolGroup>
            <Grip />
            <Tool>
              <Icon name="layer" />
            </Tool>
            <Combo $w={292}>
              <Icon name="bulb" size={14} />
              <Icon name="sun" size={15} />
              <Icon name="vpfreeze" size={15} />
              <Gap $w={1} />
              <Icon name="lock" size={14} />
              <Icon name="swatch" size={13} />
              0
            </Combo>
            <Tool>
              <Icon name="layerM" />
            </Tool>
            <Tool>
              <Icon name="layerP" />
            </Tool>
            <Tool>
              <Icon name="layerI" />
            </Tool>
          </ToolGroup>
          <Grip />
          <Combo $w={146}>
            <Icon name="swatch" size={14} />
            ByLayer
          </Combo>
          <Grip />
          <Combo $w={156}>
            <ComboLine $w={60} />
            ByLayer
          </Combo>
          <Grip />
          <Combo $w={122}>
            <ComboLine $w={34} />
            ByLayer
          </Combo>
          <Grip />
          <Combo $w={116} $muted>
            <Gap $w={4} />
            ByColor
          </Combo>
        </ToolRow>
        <ToolRow>
          <ToolGroup>
            <Grip />
            <Tools items={row2a} />
          </ToolGroup>
          <ToolGroup>
            <Grip />
            <Tools items={row2b} />
            <NormalCombo $w={117}>
              <Gap $w={13} />
              normal
            </NormalCombo>
            <Tool $w={20}>
              <Icon name="dimSt" />
            </Tool>
          </ToolGroup>
          <ToolGroup>
            <Grip />
            <Tools items={row2c} />
          </ToolGroup>
        </ToolRow>
      </ToolArea>
      <Main>
        <Dock $w={30} $pl={2}>
          <DockBar>
            <DockGrip />
            {leftDock.map((n) => (
              <DockItem key={n}>
                <Icon name={n} />
              </DockItem>
            ))}
          </DockBar>
        </Dock>
        <Canvas>
          <Drawing viewBox="32.5 129.6 1533 1173">
            <ViewCube />
            <Plan />
            <Labels />
            <UcsIcon />
          </Drawing>
          <CommandHistory>
            <HistoryLine>命令: _textedit</HistoryLine>
            <HistoryLine>当前设置: 编辑模式 = Multiple</HistoryLine>
            <HistoryLine>选择注释对象或 [放弃(U)/模式(M)]: *取消*</HistoryLine>
          </CommandHistory>
          <CommandBar>
            <CommandTools>
              <CommandGrip />
              <Glyph $size={11}>
                <path d="M2 2l12 12M14 2L2 14" stroke={L} strokeWidth={1.8} />
              </Glyph>
              <Glyph $size={15}>
                <path d="M2 15L9 7M8 8c-2-3 1-7 5-6l-2 3 2 2 3-2c0 4-4 6-7 5" fill={L} stroke={L} />
              </Glyph>
            </CommandTools>
            <CommandInput>
              <Glyph $size={16}>
                <path d="M0 2h16v12H0z" fill="#3f4650" />
                <path d="M1 5h14v8H1z" fill="#b0b0b0" />
                <path d="M3 7l2 2-2 2M6 11h3" stroke="#3f4650" fill="none" />
              </Glyph>
              <Caret $w={12} $color="#444" />
              <Gap $w={6} />
              键入命令
            </CommandInput>
          </CommandBar>
        </Canvas>
        <Dock $w={33} $pl={3}>
          <DockBar>
            <DockGrip />
            {rightDock.map((n) => (
              <DockItem key={n}>
                <Icon name={n} />
              </DockItem>
            ))}
          </DockBar>
        </Dock>
      </Main>
      <StatusBar>
        <LayoutTabs>
          <LayoutTab $w={44} $active>模型</LayoutTab>
          <LayoutTab $w={50}>布局1</LayoutTab>
          <LayoutTab $w={22}>+</LayoutTab>
        </LayoutTabs>
        <Coords $w={136}>62666, 57931, 0</Coords>
        <StatusGroup $w={29}>
          <StatusText $w={29} $bold>模型</StatusText>
        </StatusGroup>
        <StatusGroup>
          <StatusItems items={[['grid', 24], ['snap', 24], ['v', 14]]} />
        </StatusGroup>
        <StatusGroup>
          <StatusItems
            items={[
              ['infer', 25], ['dyn', 22, true], ['v', 2], ['ortho', 22, true], ['polar', 24], ['v', 14], ['iso', 26], ['v', 12], ['track', 27], ['osnap', 22, true],
              ['v', 16], ['lw', 26], ['transp', 22, true], ['selc', 25], ['osnap3', 25], ['v', 18], ['dynu', 22, true], ['boxsel', 24], ['v', 15], ['gizmo', 22, true], ['v', 17],
            ]}
          />
        </StatusGroup>
        <StatusGroup>
          <StatusItems items={[['annoT', 22, true], ['annoS', 26], ['anno', 24]]} />
          <StatusText $w={54}>1:1 / 100%</StatusText>
          <Caret $w={16} />
        </StatusGroup>
        <StatusGroup>
          <StatusItems items={[['gear', 26], ['v', 12], ['plus', 26]]} />
        </StatusGroup>
        <StatusGroup>
          <StatusBtn $w={20}>
            <Icon name="ruler" />
          </StatusBtn>
          <StatusText $w={46}>小数</StatusText>
          <Gap $w={14} />
          <Caret $w={14} />
        </StatusGroup>
        <StatusGroup>
          <StatusItems items={[['calcS', 24]]} />
        </StatusGroup>
        <StatusGroup>
          <StatusItems items={[['wlock', 26], ['v', 14], ['isol', 24]]} />
        </StatusGroup>
        <StatusGroup>
          <StatusItems items={[['hw', 24, true], ['annmon', 24]]} />
        </StatusGroup>
        <StatusGroup>
          <StatusItems items={[['clean2', 24], ['burger', 24]]} />
        </StatusGroup>
      </StatusBar>
      {WATERMARKS.map(([x, y]) => (
        <Watermark key={`${x}-${y}`} $x={x} $y={y}>
          知末网www.znzmo.com
        </Watermark>
      ))}
      <Brand>知末</Brand>
      <BrandId>ID: 1178023212</BrandId>
    </Window>
  )
}

export default App
